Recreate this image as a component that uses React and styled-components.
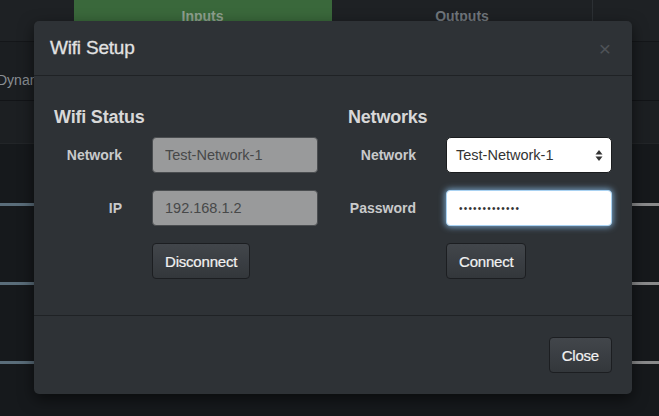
import React from 'react';
import styled, { createGlobalStyle } from 'styled-components';

const GlobalStyle = createGlobalStyle`
  html, body {
    margin: 0;
    padding: 0;
    background: #16191c;
    font-family: "Liberation Sans", Arial, sans-serif;
  }
`;

const Page = styled.div`
  position: relative;
  width: 659px;
  height: 416px;
  overflow: hidden;
  background: #16191c;
  display: flex;
  flex-direction: column;
`;

const TopBar = styled.div`
  height: 41px;
  display: grid;
  grid-template-columns: 74px 258px 261px 1fr;
  background: #1e2124;
  border-bottom: 1px solid #141619;
`;

const Tab = styled.div`
  display: flex;
  align-items: center;
  justify-content: center;
  padding-bottom: 9px;
  font-size: 14px;
  font-weight: bold;
  color: ${(p) => (p.active ? '#8fa08f' : '#70767c')};
  background: ${(p) => (p.active ? '#3a683b' : 'transparent')};
  border-right: 1px solid ${(p) => (p.divider ? '#2c3034' : 'transparent')};
`;

const SubBar = styled.div`
  height: 59px;
  display: flex;
  align-items: center;
  padding-top: 18px;
  box-sizing: border-box;
  background: #1b1e21;
  border-bottom: 1px solid #121417;
  font-size: 14px;
  color: #8a8f94;
  text-indent: -3px;
`;

const Band = styled.div`
  height: 42px;
  background: #1c1f22;
  border-bottom: 1px solid #222528;
`;

const TrackList = styled.div`
  display: flex;
  flex-direction: column;
  gap: 76px;
  margin-top: 59px;
`;

const Track = styled.div`
  height: 3px;
  display: flex;
`;

const TrackFill = styled.div`
  flex: ${(p) => p.grow};
  background: ${(p) => p.color};
`;

const Modal = styled.div`
  position: absolute;
  left: 34px;
  top: 21px;
  width: 598px;
  background: #2e3236;
  border-radius: 5px;
  box-shadow: 0 5px 15px rgba(0, 0, 0, 0.55);
  display: flex;
  flex-direction: column;
  color: #dcdcdc;
`;

const Header = styled.div`
  height: 54px;
  display: flex;
  align-items: center;
  justify-content: space-between;
  padding: 0 21px 0 16px;
  border-bottom: 1px solid #1f2225;
`;

const Title = styled.h4`
  margin: 0;
  font-size: 19px;
  font-weight: normal;
  color: #e2e2e2;
  letter-spacing: -0.2px;
  -webkit-text-stroke: 0.3px #e2e2e2;
`;

const CloseX = styled.span`
  font-size: 21px;
  line-height: 1;
  color: #4e5358;
`;

const Body = styled.div`
  display: grid;
  grid-template-columns: 264px 264px;
  column-gap: 30px;
  padding: 31px 20px 36px;
  border-bottom: 1px solid #1f2225;
`;

const Column = styled.div`
  display: flex;
  flex-direction: column;
`;

const Heading = styled.h3`
  margin: 0 0 10px;
  height: 20px;
  line-height: 20px;
  font-size: 18px;
  font-weight: bold;
  color: #d8d8d8;
  letter-spacing: -0.2px;
`;

const Form = styled.div`
  display: grid;
  grid-template-columns: 68px 166px;
  column-gap: 30px;
  row-gap: 17px;
  align-items: center;
`;

const Label = styled.label`
  text-align: right;
  font-size: 14px;
  font-weight: bold;
  color: #c9cacb;
`;

const Field = styled.input`
  box-sizing: border-box;
  width: 166px;
  height: 36px;
  padding: 0 12px;
  border-radius: 4px;
  font-family: "Liberation Sans", Arial, sans-serif;
  font-size: 14.5px;
  outline: none;
  border: 1px solid ${(p) => (p.focused ? '#a9d2f2' : '#4a4d50')};
  background: ${(p) => (p.disabled ? '#999a9b' : '#ffffff')};
  color: ${(p) => (p.disabled ? '#474849' : '#333')};
  box-shadow: ${(p) => (p.focused ? '0 0 6px 1px rgba(140, 195, 240, 0.8)' : 'none')};

  &[type='password'] {
    font-size: 10px;
    letter-spacing: 1.2px;
  }

  &:disabled {
    -webkit-text-fill-color: #474849;
    opacity: 1;
  }
`;

const SelectBox = styled.div`
  box-sizing: border-box;
  width: 166px;
  height: 36px;
  padding: 0 8px 0 9px;
  border-radius: 5px;
  border: 1px solid #1b1d1f;
  background: #fff;
  color: #333;
  font-size: 14.5px;
  display: flex;
  align-items: center;
  justify-content: space-between;
`;

const Button = styled.button`
  box-sizing: border-box;
  height: 36px;
  padding: 0 12px;
  border-radius: 4px;
  border: 1px solid #1c1e21;
  background: linear-gradient(#42464b, #33373b);
  color: #f2f2f2;
  font-family: "Liberation Sans", Arial, sans-serif;
  font-size: 15px;
  letter-spacing: -0.2px;
  -webkit-text-stroke: 0.2px #f2f2f2;
  justify-self: start;
  cursor: pointer;
`;

const Footer = styled.div`
  display: flex;
  justify-content: flex-end;
  padding: 21px 20px 21px;
`;

const Spacer = styled.span``;

const SelectArrows = () => (
  <svg width="8" height="13" viewBox="0 0 8 13">
    <path d="M4 1 L7.5 5.5 H0.5 Z" fill="#333" />
    <path d="M4 12 L7.5 7.5 H0.5 Z" fill="#333" />
  </svg>
);

const Tracks = () => (
  <TrackList>
    {[0, 1, 2].map((i) => (
      <Track key={i}>
        <TrackFill grow={1} color="#5a6d7a" />
        <TrackFill grow={2} color="#8a8b8c" />
      </Track>
    ))}
  </TrackList>
);

export default function App() {
  return (
    <>
      <GlobalStyle />
      <Page>
        <TopBar>
          <Tab />
          <Tab active>Inputs</Tab>
          <Tab divider>Outputs</Tab>
          <Tab />
        </TopBar>
        <SubBar>Dynamics</SubBar>
        <Band />
        <Tracks />

        <Modal>
          <Header>
            <Title>Wifi Setup</Title>
            <CloseX>×</CloseX>
          </Header>
          <Body>
            <Column>
              <Heading>Wifi Status</Heading>
              <Form>
                <Label>Network</Label>
                <Field disabled value="Test-Network-1" readOnly />
                <Label>IP</Label>
                <Field disabled value="192.168.1.2" readOnly />
                <Spacer />
                <Button>Disconnect</Button>
              </Form>
            </Column>
            <Column>
              <Heading>Networks</Heading>
              <Form>
                <Label>Network</Label>
                <SelectBox>
                  Test-Network-1
                  <SelectArrows />
                </SelectBox>
                <Label>Password</Label>
                <Field focused type="password" value="secretpasswd1" readOnly />
                <Spacer />
                <Button>Connect</Button>
              </Form>
            </Column>
          </Body>
          <Footer>
            <Button>Close</Button>
          </Footer>
        </Modal>
      </Page>
    </>
  );
}
